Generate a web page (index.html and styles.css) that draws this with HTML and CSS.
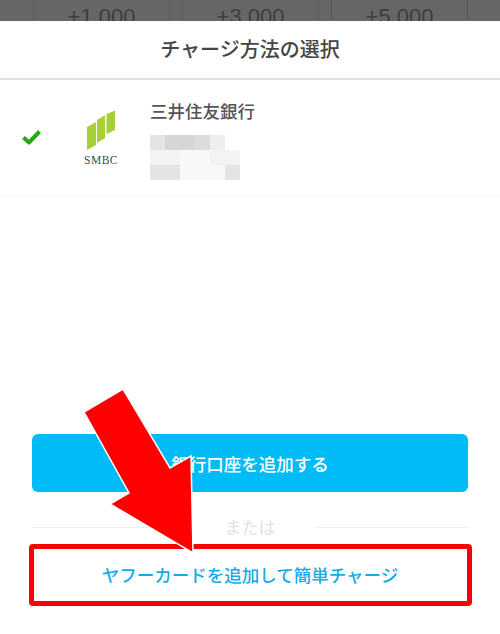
FILE: index.html
```html
<!DOCTYPE html>
<html lang="ja">
<head>
<meta charset="utf-8">
<title>チャージ方法の選択</title>
<link rel="stylesheet" href="styles.css">
</head>
<body>
<div class="page">
  <div class="amounts">
    <div class="amount">+1,000</div>
    <div class="amount">+3,000</div>
    <div class="amount">+5,000</div>
  </div>
  <div class="sheet">
    <h1 class="title">チャージ方法の選択</h1>
    <div class="account">
      <svg class="check" viewBox="0 0 22 18" width="22" height="18"><path d="M3.500 9.500 L9 14.500 L19.500 3.500" fill="none" stroke="#22ac0e" stroke-width="4" stroke-linejoin="round"/></svg>
      <div class="logo">
        <svg viewBox="0 0 30 41" width="30" height="41"><path fill="#a6cf3a" d="M1 17 L10 12 V35 L1 40Z M11 10 L19 5 V28 L11 33Z M20.500 4 L29 .5 V20 L20.500 24Z"/></svg>
        <span class="smbc">SMBC</span>
      </div>
      <div class="info">
        <div class="bank">三井住友銀行</div>
        <div class="mosaic">
          <i class="m3"></i><i class="m1"></i><i class="m1"></i><i class="m2"></i><i class="m4"></i><i class="m0"></i>
          <i class="m5"></i><i class="m5"></i><i class="m6"></i><i class="m6"></i><i class="m5"></i><i class="m5"></i>
          <i class="m3"></i><i class="m3"></i><i class="m6"></i><i class="m6"></i><i class="m6"></i><i class="m3"></i>
        </div>
      </div>
    </div>
    <div class="actions">
      <button class="primary">銀行口座を追加する</button>
      <div class="divider"><span>または</span></div>
      <button class="secondary">ヤフーカードを追加して簡単チャージ</button>
    </div>
  </div>
  <div class="highlight"></div>
  <svg class="arrow" viewBox="0 0 500 634" width="500" height="634"><path fill="#f00" stroke="#fff" stroke-width="1.500" d="M123 389 L84 412 L129 493 L110 504 L193 553 L191 456 L170 468 Z"/></svg>
</div>
</body>
</html>
```
FILE: styles.css
```css
* { box-sizing: border-box; }
html, body { margin: 0; padding: 0; }
body { font-family: "Noto Sans CJK JP", "Liberation Sans", sans-serif; background: #fff; }
.page { position: relative; width: 500px; height: 634px; overflow: hidden; display: flex; flex-direction: column; }
.amounts { height: 21px; flex: none; background: #666; display: flex; gap: 12px; padding-left: 33px; overflow: hidden; }
.amount { width: 137px; height: 40px; border-left: 1px solid #5a5a5a; border-right: 1px solid #5a5a5a; color: #3e3e3e; font: 22px/33px "Liberation Sans", sans-serif; text-align: center; }
.sheet { flex: 1; display: flex; flex-direction: column; background: #fff; }
.title { margin: 0; height: 59px; flex: none; border-bottom: 2px solid #e0e0e0; color: #444; font-size: 20px; font-weight: 500; line-height: 56px; text-align: center; }
.account { height: 116px; flex: none; border-bottom: 1px solid #f6f6f6; display: flex; align-items: flex-start; }
.check { margin: 48px 0 0 20px; flex: none; }
.logo { width: 40px; margin: 30px 0 0 39px; flex: none; display: flex; flex-direction: column; align-items: center; }
.smbc { font: 11.500px/12px "Liberation Serif", serif; color: #1f5a50; letter-spacing: .5px; margin-top: 3px; }
.info { margin: 19px 0 0 29px; }
.bank { color: #555; font-size: 17.500px; font-weight: 500; line-height: 24px; }
.mosaic { margin-top: 12px; display: grid; grid-template-columns: repeat(6, 15px); grid-auto-rows: 15px; }
.m0 { background: #fff; } .m1 { background: #d6d6d6; } .m2 { background: #dcdcdc; } .m3 { background: #e4e4e4; }
.m4 { background: #eee; } .m5 { background: #f3f3f3; } .m6 { background: #f8f8f8; }
.actions { margin-top: auto; padding: 0 32px 32px; display: flex; flex-direction: column; }
button { display: block; width: 100%; border: 0; padding: 0; font-family: inherit; font-weight: 500; font-size: 17.500px; }
.primary { height: 58px; border-radius: 6px; background: #00bbf6; color: #fff; }
.divider { height: 68px; position: relative; display: flex; justify-content: center; }
.divider::before { content: ""; position: absolute; left: 0; right: 0; top: 35px; border-top: 1px solid #f0f0f0; }
.divider span { position: relative; height: 32px; margin-top: 19px; padding: 0 40px; background: #fff; color: #e2e2e2; font-size: 17px; line-height: 32px; }
.secondary { height: 56px; margin-top: -14px; background: transparent; color: #14ace8; }
.highlight { position: absolute; left: 29px; top: 544px; width: 443px; height: 62px; border: 5px solid #f00; border-radius: 4px; }
.arrow { position: absolute; left: 0; top: 0; }
```
